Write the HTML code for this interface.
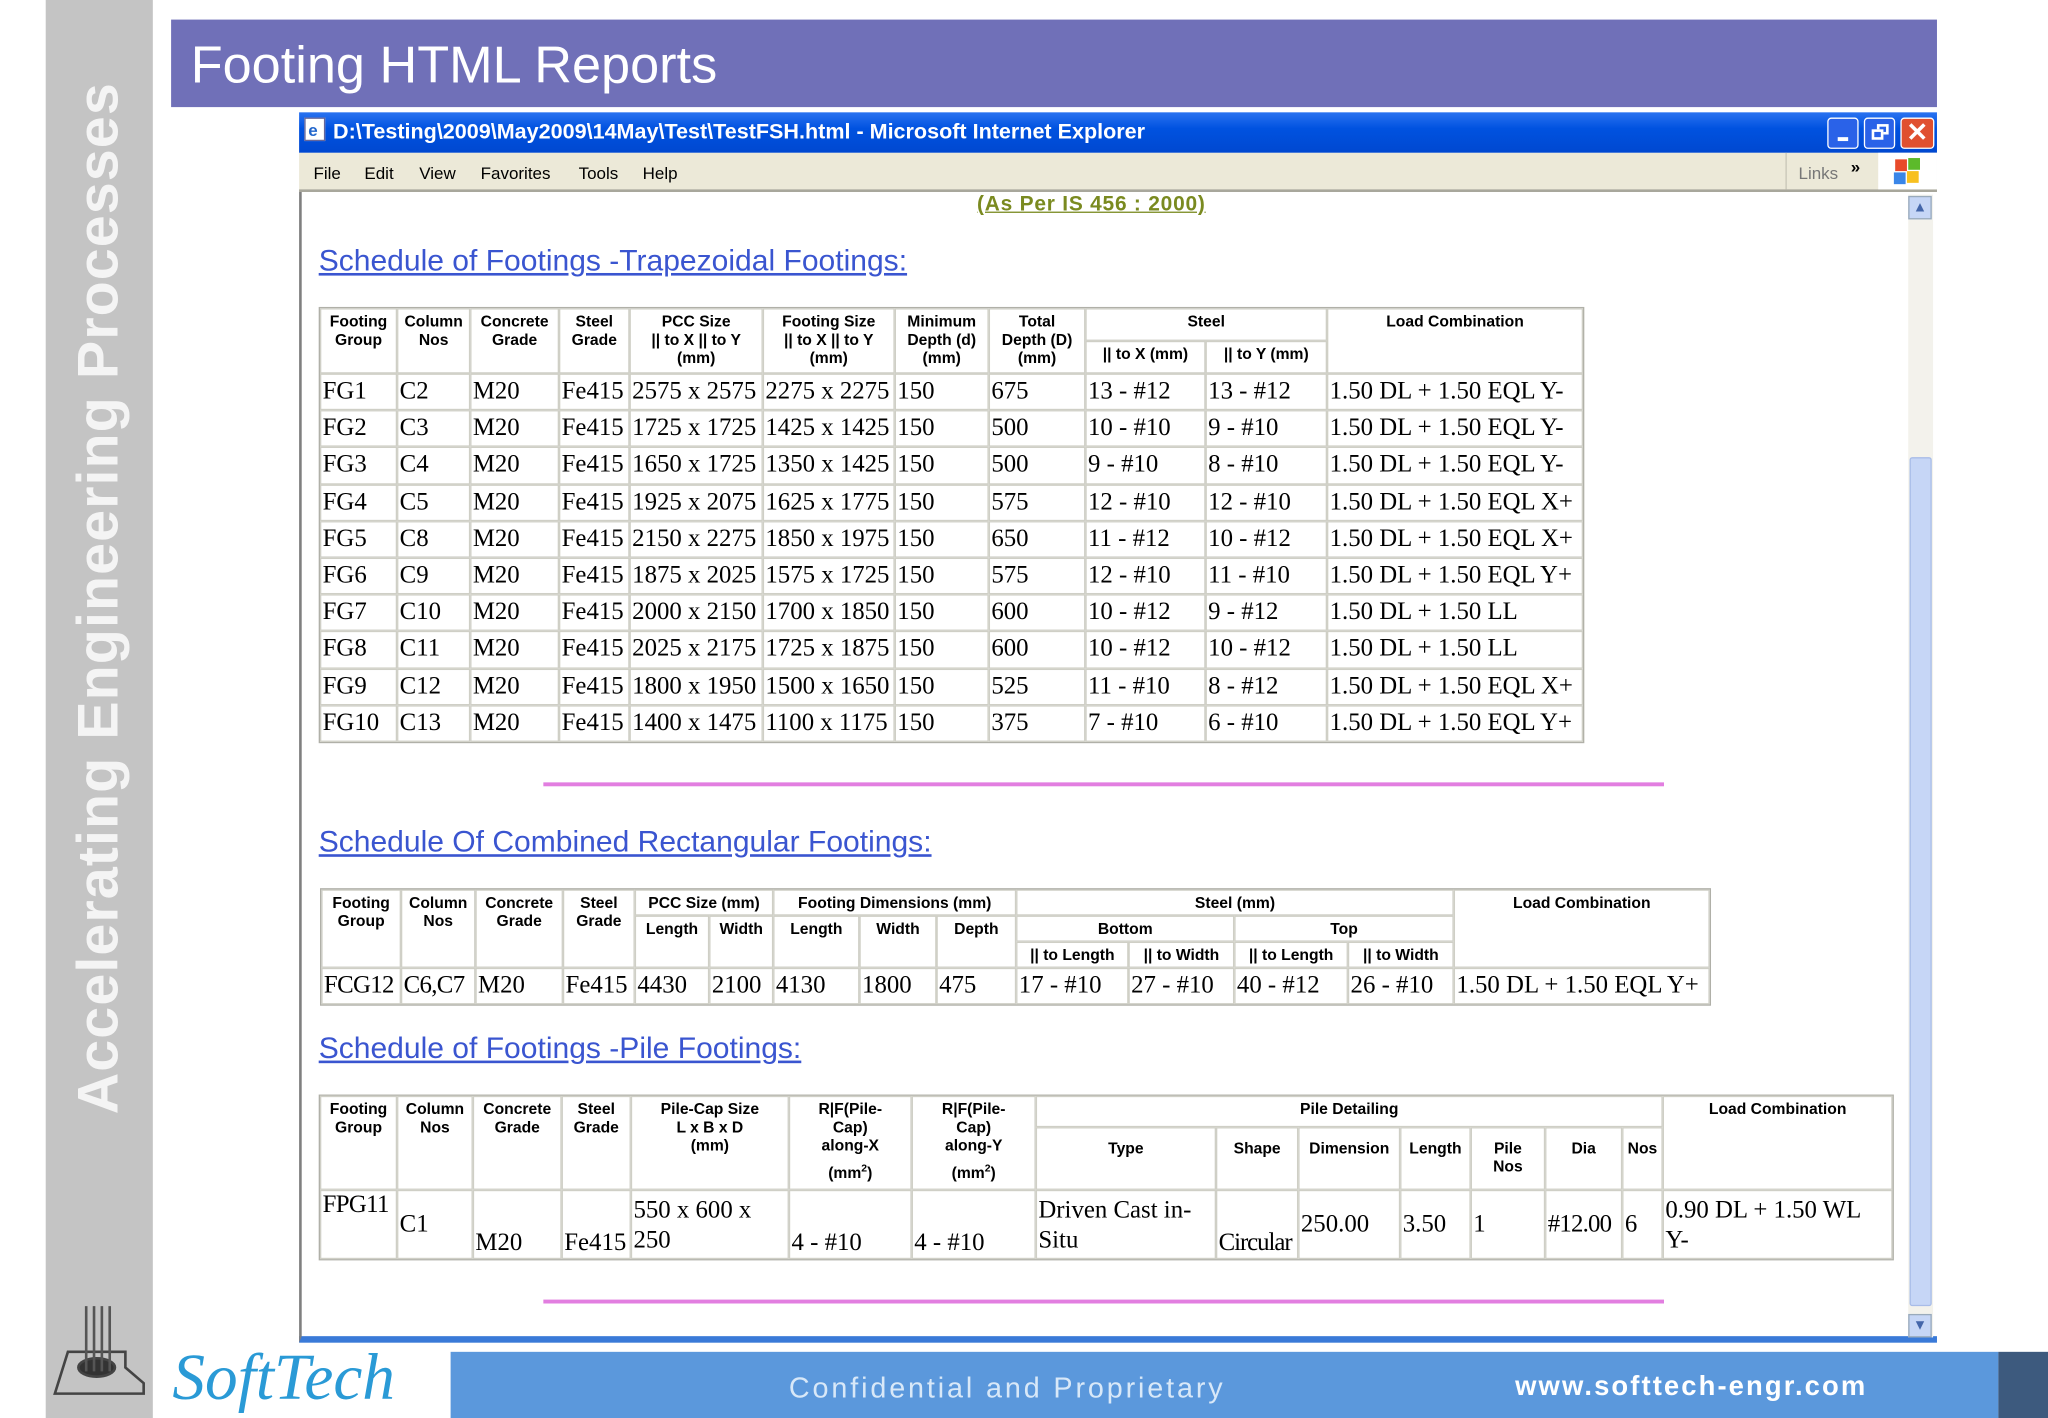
<!DOCTYPE html>
<html><head><meta charset="utf-8"><style>
*{margin:0;padding:0;box-sizing:border-box}
html,body{width:2048px;height:1418px;overflow:hidden;background:#fff}
#s{position:absolute;left:0;top:0;width:1568px;height:1086px;transform:scale(1.30612);transform-origin:0 0;font-family:"Liberation Sans",sans-serif}
.a{position:absolute}
.strip{left:35px;top:0;width:82px;height:1086px;background:#c4c4c4}
.vt{left:76px;top:458px;transform:translate(-50%,-50%) rotate(-90deg);white-space:nowrap;font-size:44px;font-weight:bold;color:#f4f4f4;letter-spacing:0.8px}
.title{left:131px;top:15px;width:1352px;height:67px;background:#7070b8;color:#fff;font-size:40px;padding:13px 0 0 15px}
.tb{left:229px;top:86px;width:1254px;height:31px;background:linear-gradient(#2a72f0,#0052e0 40%,#0048d0);color:#fff;font-weight:bold;font-size:16.5px;padding:6px 0 0 26px}
.menu{left:229px;top:117px;width:1254px;height:30px;background:#ece9d8;font-size:13px;border-bottom:2px solid #a8a79c}
.menu span{position:absolute;top:8px}
.cont{left:229px;top:147px;width:1254px;height:881px;background:#fff;border-left:2px solid #7f7f7f;border-bottom:5px solid #3a7ad8}
.sb{left:1461px;top:149px;width:19px;height:875px;background:#f3f2ec}
.thumb{left:1462px;top:350px;width:17px;height:650px;background:#c6d6f6;border:1px solid #a8bce8;border-radius:2px}
h2{position:absolute;font-weight:normal;font-size:23px;color:#3a55d0;text-decoration:underline;font-family:"Liberation Sans",sans-serif}
table{position:absolute;border-collapse:separate;border-spacing:0;table-layout:fixed;border:1px solid #b0b0a8}
td{border:1px solid #cfcfc6;padding:0 1px;font-family:"Liberation Serif",serif;font-size:19px;white-space:nowrap;overflow:hidden;vertical-align:middle}
th{border:1px solid #cfcfc6;font-size:12px;font-weight:bold;line-height:14px;vertical-align:top;padding-top:2px;overflow:hidden;white-space:nowrap}
.pl{height:3px;background:#e27ee0}
.foot{left:345px;top:1035px;width:1185px;height:51px;background:#5b98dc}
</style></head><body><div id="s">
<div class="a strip"></div>
<div class="a vt">Accelerating Engineering Processes</div>
<svg class="a" style="left:38px;top:995px" width="80" height="80" viewBox="0 0 80 80"><g stroke="#444" fill="none" stroke-width="2"><path d="M4 72 L14 40 L58 40 L58 52 L72 64 L72 72 Z"/><ellipse cx="36" cy="52" rx="14" ry="7" fill="#333"/></g><g stroke="#555" stroke-width="2"><path d="M28 5V55M34 5V55M40 5V55M46 5V55"/></g></svg>
<div class="a" style="left:132px;top:1025px;font-family:'Liberation Serif',serif;font-style:italic;font-size:50px;color:#2a9ad6">SoftTech</div>
<div class="a foot"></div>
<div class="a" style="left:1530px;top:1035px;width:38px;height:51px;background:#3d5a7e"></div>
<div class="a" style="left:604px;top:1050px;font-size:22px;color:#d8e8f8;letter-spacing:2.2px">Confidential and Proprietary</div>
<div class="a" style="left:1160px;top:1050px;font-size:21px;font-weight:bold;color:#fff;letter-spacing:1.6px">www.softtech-engr.com</div>
<div class="a title">Footing HTML Reports</div>
<div class="a tb">D:\Testing\2009\May2009\14May\Test\TestFSH.html - Microsoft Internet Explorer</div>
<div class="a" style="left:233px;top:90px;width:16px;height:18px;background:#fff;border:1px solid #669"><span style="color:#26c;font-size:13px;font-weight:bold;margin-left:2px">e</span></div>
<div class="a" style="left:1399px;top:90px;width:24px;height:24px;background:#2a62e8;border:1px solid #fff;border-radius:3px"><div class="a" style="left:7px;top:14px;width:8px;height:3px;background:#fff"></div></div>
<div class="a" style="left:1427px;top:90px;width:24px;height:24px;background:#2a62e8;border:1px solid #fff;border-radius:3px"><div class="a" style="left:9px;top:4px;width:9px;height:8px;border:2px solid #fff"></div><div class="a" style="left:5px;top:8px;width:9px;height:8px;border:2px solid #fff;background:#2a62e8"></div></div>
<div class="a" style="left:1455px;top:90px;width:26px;height:24px;background:#e05030;border:1px solid #fff;border-radius:3px;color:#fff;font-size:20px;font-weight:bold;text-align:center;line-height:22px">✕</div>
<div class="a menu"><span style="left:11px">File</span><span style="left:50px">Edit</span><span style="left:92px">View</span><span style="left:139px">Favorites</span><span style="left:214px">Tools</span><span style="left:263px">Help</span>
<div class="a" style="left:1138px;top:0;width:1px;height:28px;background:#c8c6b8"></div><span style="left:1148px;color:#777">Links</span><span style="left:1188px;top:3px;font-weight:bold">»</span>
<div class="a" style="left:1209px;top:0;width:45px;height:28px;background:#fff"></div>
<div class="a" style="left:1222px;top:5px;width:9px;height:9px;background:#e84a2a"></div><div class="a" style="left:1232px;top:4px;width:9px;height:9px;background:#5cba2a"></div><div class="a" style="left:1221px;top:15px;width:9px;height:9px;background:#3a86e8"></div><div class="a" style="left:1231px;top:14px;width:9px;height:9px;background:#f8c020"></div>
</div>
<div class="a cont"></div>
<div class="a sb"></div>
<div class="a" style="left:1461px;top:150px;width:18px;height:18px;background:#c6d6f6;border:1px solid #9ab;color:#46a;font-size:11px;text-align:center;line-height:16px">▲</div>
<div class="a thumb"></div>
<div class="a" style="left:1461px;top:1006px;width:18px;height:18px;background:#c6d6f6;border:1px solid #9ab;color:#46a;font-size:11px;text-align:center;line-height:16px">▼</div>
<div class="a" style="left:748px;top:148px;font-size:16px;font-weight:bold;color:#7a8a20;text-decoration:underline;letter-spacing:0.6px">(As Per IS 456 : 2000)</div>

<h2 style="left:244px;top:186px">Schedule of Footings -Trapezoidal Footings:</h2>
<table style="left:244px;top:235px;width:967px">
<colgroup><col style="width:59px"><col style="width:56px"><col style="width:68px"><col style="width:54px"><col style="width:102px"><col style="width:101px"><col style="width:72px"><col style="width:74px"><col style="width:92px"><col style="width:93px"><col style="width:196px"></colgroup>
<tr style="height:25px"><th rowspan="2">Footing<br>Group</th><th rowspan="2">Column<br>Nos</th><th rowspan="2">Concrete<br>Grade</th><th rowspan="2">Steel<br>Grade</th><th rowspan="2">PCC Size<br>|| to X || to Y<br>(mm)</th><th rowspan="2">Footing Size<br>|| to X || to Y<br>(mm)</th><th rowspan="2">Minimum<br>Depth (d)<br>(mm)</th><th rowspan="2">Total<br>Depth (D)<br>(mm)</th><th colspan="2">Steel</th><th rowspan="2">Load Combination</th></tr>
<tr style="height:25px"><th>|| to X (mm)</th><th>|| to Y (mm)</th></tr>
<tr style="height:28.2px"><td>FG1</td><td>C2</td><td>M20</td><td>Fe415</td><td>2575 x 2575</td><td>2275 x 2275</td><td>150</td><td>675</td><td>13 - #12</td><td>13 - #12</td><td>1.50 DL + 1.50 EQL Y-</td></tr>
<tr style="height:28.2px"><td>FG2</td><td>C3</td><td>M20</td><td>Fe415</td><td>1725 x 1725</td><td>1425 x 1425</td><td>150</td><td>500</td><td>10 - #10</td><td>9 - #10</td><td>1.50 DL + 1.50 EQL Y-</td></tr>
<tr style="height:28.2px"><td>FG3</td><td>C4</td><td>M20</td><td>Fe415</td><td>1650 x 1725</td><td>1350 x 1425</td><td>150</td><td>500</td><td>9 - #10</td><td>8 - #10</td><td>1.50 DL + 1.50 EQL Y-</td></tr>
<tr style="height:28.2px"><td>FG4</td><td>C5</td><td>M20</td><td>Fe415</td><td>1925 x 2075</td><td>1625 x 1775</td><td>150</td><td>575</td><td>12 - #10</td><td>12 - #10</td><td>1.50 DL + 1.50 EQL X+</td></tr>
<tr style="height:28.2px"><td>FG5</td><td>C8</td><td>M20</td><td>Fe415</td><td>2150 x 2275</td><td>1850 x 1975</td><td>150</td><td>650</td><td>11 - #12</td><td>10 - #12</td><td>1.50 DL + 1.50 EQL X+</td></tr>
<tr style="height:28.2px"><td>FG6</td><td>C9</td><td>M20</td><td>Fe415</td><td>1875 x 2025</td><td>1575 x 1725</td><td>150</td><td>575</td><td>12 - #10</td><td>11 - #10</td><td>1.50 DL + 1.50 EQL Y+</td></tr>
<tr style="height:28.2px"><td>FG7</td><td>C10</td><td>M20</td><td>Fe415</td><td>2000 x 2150</td><td>1700 x 1850</td><td>150</td><td>600</td><td>10 - #12</td><td>9 - #12</td><td>1.50 DL + 1.50 LL</td></tr>
<tr style="height:28.2px"><td>FG8</td><td>C11</td><td>M20</td><td>Fe415</td><td>2025 x 2175</td><td>1725 x 1875</td><td>150</td><td>600</td><td>10 - #12</td><td>10 - #12</td><td>1.50 DL + 1.50 LL</td></tr>
<tr style="height:28.2px"><td>FG9</td><td>C12</td><td>M20</td><td>Fe415</td><td>1800 x 1950</td><td>1500 x 1650</td><td>150</td><td>525</td><td>11 - #10</td><td>8 - #12</td><td>1.50 DL + 1.50 EQL X+</td></tr>
<tr style="height:28.2px"><td>FG10</td><td>C13</td><td>M20</td><td>Fe415</td><td>1400 x 1475</td><td>1100 x 1175</td><td>150</td><td>375</td><td>7 - #10</td><td>6 - #10</td><td>1.50 DL + 1.50 EQL Y+</td></tr>
</table>
<div class="a pl" style="left:416px;top:599px;width:858px"></div>

<h2 style="left:244px;top:631px">Schedule Of Combined Rectangular Footings:</h2>
<table style="left:245px;top:680px;width:1063px">
<colgroup><col style="width:61px"><col style="width:57px"><col style="width:67px"><col style="width:55px"><col style="width:57px"><col style="width:49px"><col style="width:66px"><col style="width:59px"><col style="width:61px"><col style="width:86px"><col style="width:81px"><col style="width:87px"><col style="width:81px"><col style="width:196px"></colgroup>
<tr style="height:20px"><th rowspan="3">Footing<br>Group</th><th rowspan="3">Column<br>Nos</th><th rowspan="3">Concrete<br>Grade</th><th rowspan="3">Steel<br>Grade</th><th colspan="2">PCC Size (mm)</th><th colspan="3">Footing Dimensions (mm)</th><th colspan="4">Steel (mm)</th><th rowspan="3">Load Combination</th></tr>
<tr style="height:20px"><th rowspan="2">Length</th><th rowspan="2">Width</th><th rowspan="2">Length</th><th rowspan="2">Width</th><th rowspan="2">Depth</th><th colspan="2">Bottom</th><th colspan="2">Top</th></tr>
<tr style="height:20px"><th>|| to Length</th><th>|| to Width</th><th>|| to Length</th><th>|| to Width</th></tr>
<tr style="height:28px"><td style="letter-spacing:-0.5px">FCG12</td><td style="letter-spacing:-0.5px">C6,C7</td><td>M20</td><td>Fe415</td><td>4430</td><td>2100</td><td>4130</td><td>1800</td><td>475</td><td>17 - #10</td><td>27 - #10</td><td>40 - #12</td><td>26 - #10</td><td>1.50 DL + 1.50 EQL Y+</td></tr>
</table>

<h2 style="left:244px;top:789px">Schedule of Footings -Pile Footings:</h2>
<table style="left:244px;top:838px;width:1204px">
<colgroup><col style="width:59px"><col style="width:58px"><col style="width:68px"><col style="width:53px"><col style="width:121px"><col style="width:94px"><col style="width:95px"><col style="width:138px"><col style="width:63px"><col style="width:78px"><col style="width:54px"><col style="width:57px"><col style="width:59px"><col style="width:31px"><col style="width:176px"></colgroup>
<tr style="height:24px"><th rowspan="2">Footing<br>Group</th><th rowspan="2">Column<br>Nos</th><th rowspan="2">Concrete<br>Grade</th><th rowspan="2">Steel<br>Grade</th><th rowspan="2">Pile-Cap Size<br>L x B x D<br>(mm)</th><th rowspan="2">R|F(Pile-<br>Cap)<br>along-X<br><span style="line-height:22px">(mm<sup style="font-size:8px">2</sup>)</span></th><th rowspan="2">R|F(Pile-<br>Cap)<br>along-Y<br><span style="line-height:22px">(mm<sup style="font-size:8px">2</sup>)</span></th><th colspan="7">Pile Detailing</th><th rowspan="2">Load Combination</th></tr>
<tr style="height:48px"><th style="padding-top:8px">Type</th><th style="padding-top:8px">Shape</th><th style="padding-top:8px">Dimension</th><th style="padding-top:8px">Length</th><th style="padding-top:8px">Pile<br>Nos</th><th style="padding-top:8px">Dia</th><th style="padding-top:8px">Nos</th></tr>
<tr style="height:53px"><td style="vertical-align:top;letter-spacing:-0.5px">FPG11</td><td>C1</td><td style="vertical-align:bottom">M20</td><td style="vertical-align:bottom">Fe415</td><td style="line-height:23px">550 x 600 x<br>250</td><td style="vertical-align:bottom">4 - #10</td><td style="vertical-align:bottom">4 - #10</td><td style="line-height:23px">Driven Cast in-<br>Situ</td><td style="vertical-align:bottom;letter-spacing:-0.8px">Circular</td><td>250.00</td><td>3.50</td><td>1</td><td style="letter-spacing:-0.6px">#12.00</td><td>6</td><td style="line-height:23px">0.90 DL + 1.50 WL<br>Y-</td></tr>
</table>
<div class="a pl" style="left:416px;top:995px;width:858px"></div>
</div></body></html>
